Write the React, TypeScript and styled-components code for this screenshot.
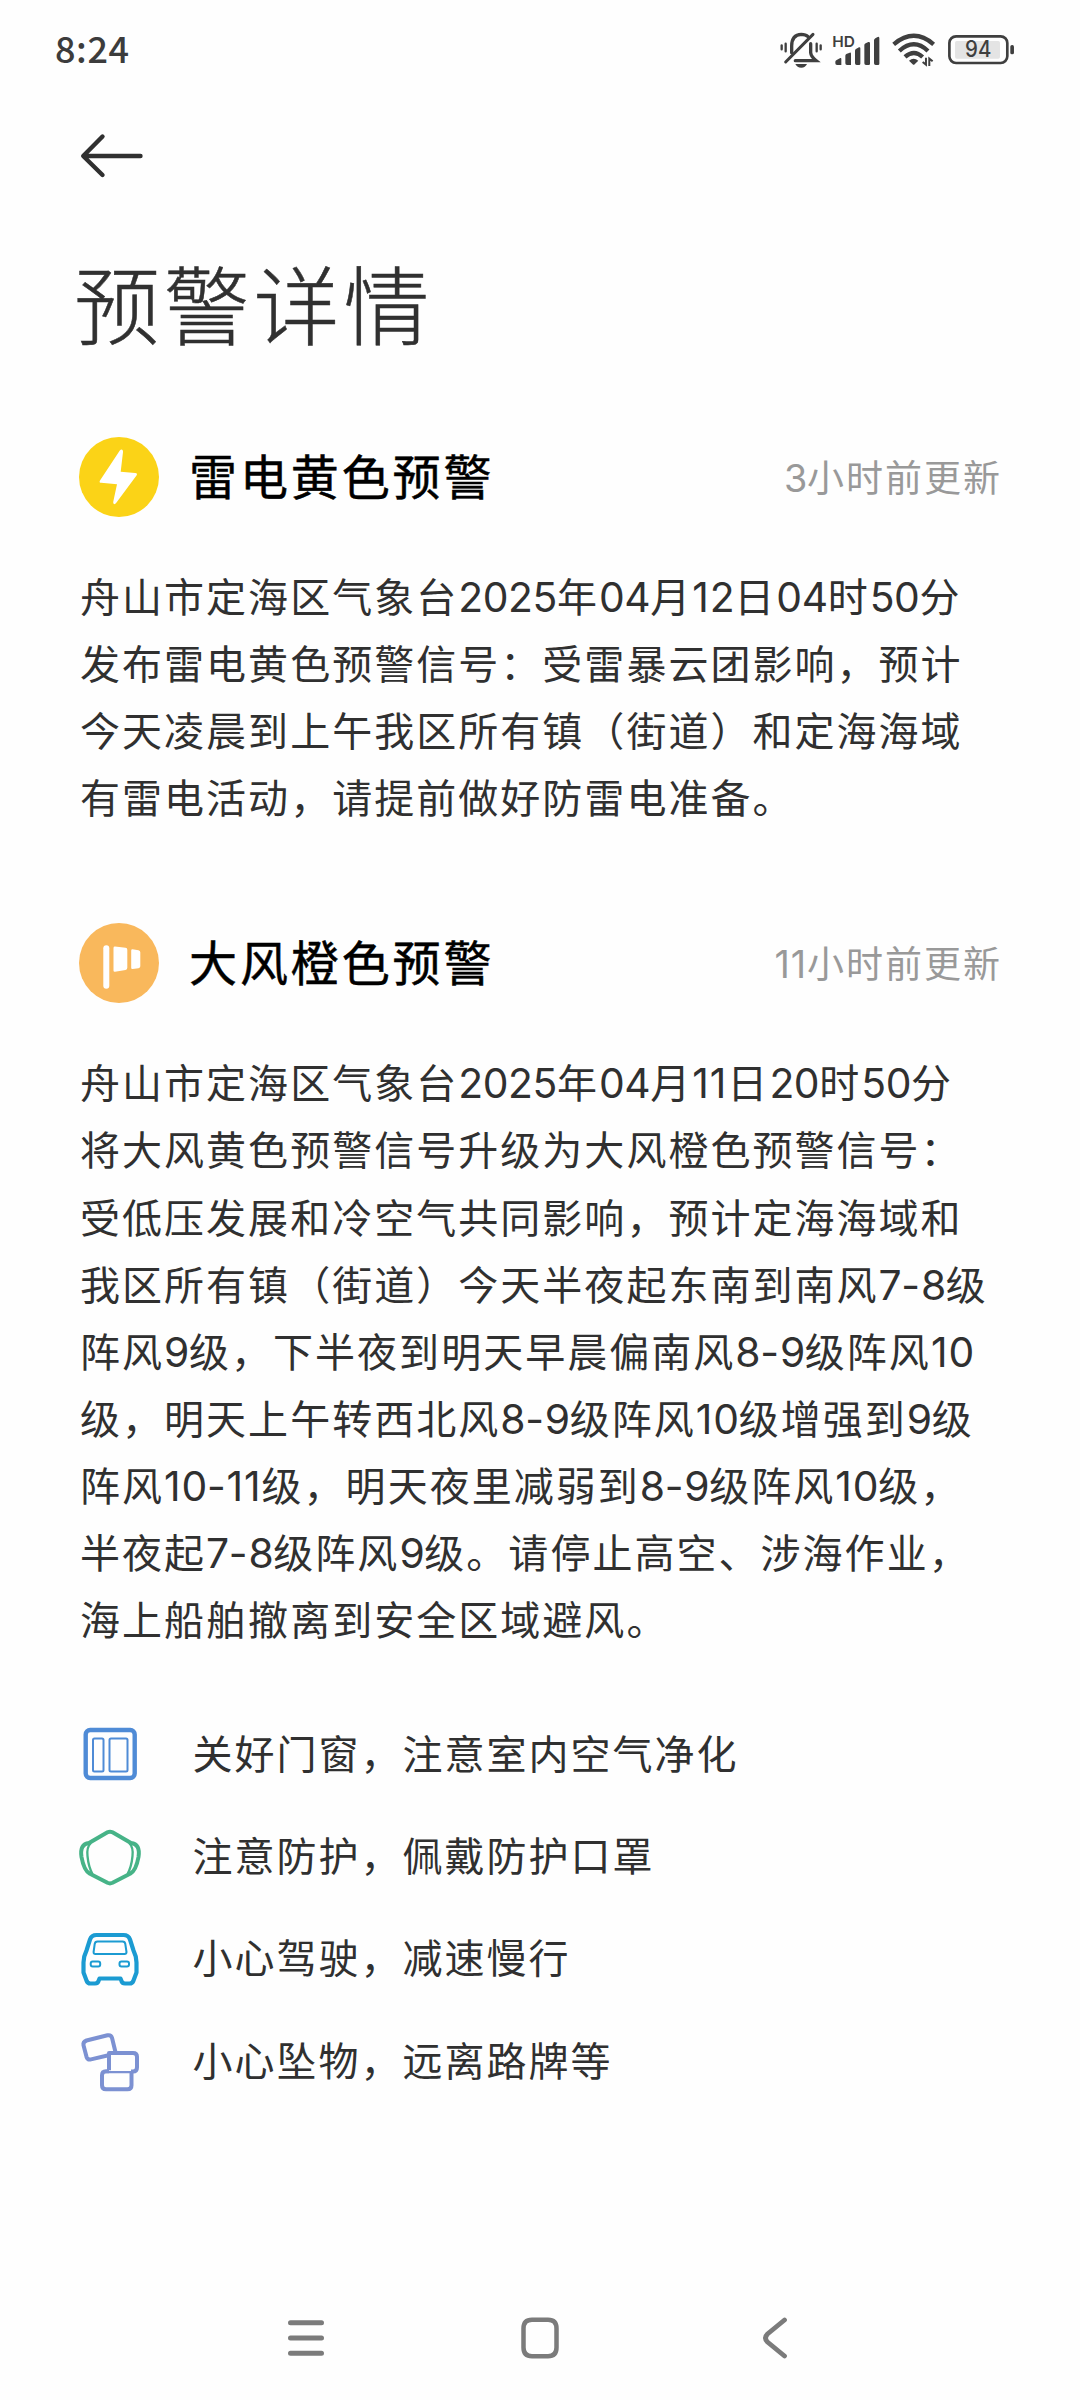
import React from "react";
import styled, { createGlobalStyle } from "styled-components";

const cjk = `"Noto Sans CJK SC", "Noto Sans", sans-serif`;

const GlobalStyle = createGlobalStyle`
  * { box-sizing: border-box; }
  body { margin: 0; background: #fefefe; }
  svg { display: block; flex: none; overflow: visible; }
`;

const Screen = styled.div`
  display: flex;
  flex-direction: column;
  width: 1080px;
  height: 2400px;
  background: #fefefe;
  color: #303030;
  font-family: ${cjk};
  overflow: hidden;
`;

const StatusBar = styled.header`
  display: flex;
  align-items: center;
  justify-content: space-between;
  height: 100px;
  padding: 0 65px 0 55px;
`;

const Clock = styled.span`
  font-size: 36px;
  font-weight: 500;
  line-height: 50px;
  padding-bottom: 6px;
  letter-spacing: 0.6px;
  color: #3c3c3c;
`;

const StatusIcons = styled.div`
  display: flex;
  align-items: center;
  color: #3f3f3f;
`;

const StatusIcon = styled.svg<{ $gap?: number }>`
  margin-left: ${(p) => p.$gap ?? 0}px;
`;

const AppBar = styled.nav`
  display: flex;
  align-items: center;
  height: 112px;
  padding-left: 81px;
`;

const BackButton = styled.button`
  border: 0;
  padding: 0;
  background: none;
  color: #303030;
`;

const Title = styled.h1`
  margin: 30px 0 0 74px;
  font-size: 86px;
  font-weight: 300;
  line-height: 120px;
  letter-spacing: 3.8px;
  -webkit-text-stroke: 0.5px currentColor;
`;

const Alert = styled.section<{ $top: number }>`
  display: flex;
  flex-direction: column;
  margin-top: ${(p) => p.$top}px;
  padding: 0 80px 0 79px;
`;

const AlertHeader = styled.div`
  display: flex;
  align-items: center;
  height: 80px;
`;

const AlertName = styled.h2`
  margin: 0 0 0 30px;
  padding-bottom: 5px;
  font-size: 48px;
  font-weight: 400;
  line-height: 75px;
  letter-spacing: 2.9px;
  color: #000;
  -webkit-text-stroke: 0.5px currentColor;
`;

const Updated = styled.span`
  margin-left: auto;
  font-size: 37px;
  line-height: 80px;
  letter-spacing: 2px;
  margin-right: -2px;
  color: #999;
  white-space: nowrap;
`;

const Body = styled.div`
  margin-top: 45px;
  padding-left: 1px;
`;

const Line = styled.p`
  margin: 0;
  height: 67.1px;
  font-size: 40px;
  line-height: 67.1px;
  letter-spacing: 2.03px;
  white-space: nowrap;
`;

const Num = styled.span<{ $narrow: boolean }>`
  font-family: Inter, ${cjk};
  font-size: 1.02em;
  font-kerning: none;
  letter-spacing: ${(p) => (p.$narrow ? 0.9 : -0.4)}px;
`;

const Tips = styled.ul`
  display: flex;
  flex-direction: column;
  margin: 51px 0 0;
  padding: 0 78px;
  list-style: none;
`;

const Tip = styled.li`
  display: flex;
  align-items: center;
  gap: 50.5px;
  height: 102.1px;
`;

const TipText = styled.span`
  padding-bottom: 4px;
  font-size: 40px;
  line-height: 60px;
  letter-spacing: 2px;
`;

const NavBar = styled.footer`
  display: flex;
  align-items: center;
  justify-content: space-between;
  height: 124px;
  margin-top: auto;
  padding: 0 293px 0 287px;
  color: #7b7b7b;
`;

const HomeIcon = styled.svg`
  margin: 0 9px 0 0;
`;

const Text = ({ value }: { value: string }) => (
  <>
    {value.split(/([023456789]+|[1-]+)/).map((part, i) =>
      i % 2 ? (
        <Num key={i} $narrow={/[1-]/.test(part)}>
          {part}
        </Num>
      ) : (
        part
      ),
    )}
  </>
);

const Thunder = () => (
  <svg width="80" height="80" viewBox="0 0 80 80">
    <circle cx="40" cy="40" r="40" fill="#fbd317" />
    <path
      d="M40.8 13.5 21 43.4c-.9 1.4-.4 2.3 1.200 2.400L38 47.200 34.300 64.600c-.5 2.800 1.500 3.400 3 1.200L57.500 38.500c1-1.500.5-2.400-1.300-2.500l-14.500-1.300 2.300-19.700c.2-2.700-1.700-3.500-3.200-1.500z"
      fill="#fff"
    />
  </svg>
);

const Wind = () => (
  <svg width="80" height="80" viewBox="0 0 80 80" fill="#fff">
    <circle cx="40" cy="40" r="40" fill="#f9b85c" />
    <rect x="24.300" y="22.300" width="6" height="43.500" rx="3" />
    <path d="M36 23.600 46.500 24.800q1.800.2 1.800 2v18q0 1.800-1.800 2.100L36 48.800q-1.500.2-1.500-1.300V25q0-1.500 1.500-1.400zM53.500 26.300l6 .9q1.800.3 1.800 2v14q0 1.700-1.800 2l-6 .8q-1.300.2-1.300-1.200V27.500q0-1.300 1.300-1.200z" />
  </svg>
);

const WindowIcon = () => (
  <svg width="64" height="64" viewBox="0 -1 64 64" fill="none" stroke="#4f8bd6">
    <rect x="7.700" y="7" width="49" height="48" rx="4.500" strokeWidth="4.400" />
    <rect x="15" y="15.500" width="10.500" height="33" rx="1.500" strokeWidth="2" />
    <rect x="31.500" y="15.500" width="18" height="33" rx="1.500" strokeWidth="2" />
  </svg>
);

const MaskIcon = () => (
  <svg width="64" height="64" viewBox="0 -1 64 64" fill="none" stroke="#46b387" strokeLinejoin="round">
    <path
      d="M29.500 7.300Q32 6 34.500 7.300L53 18Q62.500 19 60.500 32 58 45.500 52.500 48.500L34.500 57.800Q32 59 29.500 57.800L11.500 48.500Q6 45.500 3.500 32 1.500 19 11 18Z"
      strokeWidth="4"
    />
    <path d="M13 18Q8.500 22 9.500 31 10.500 42 14.500 49M51 18Q55.500 22 54.500 31 53.500 42 49.500 49" strokeWidth="2.300" />
  </svg>
);

const CarIcon = () => (
  <svg width="64" height="64" viewBox="0 -.5 64 64" fill="none" stroke="#1b9bd2" strokeLinejoin="round">
    <path
      d="M18.500 8.500Q13.500 8.500 12 13L8.500 24Q5.500 30 5.500 36V46L8.500 54Q9.500 57 12.500 57H17Q20 57 20.700 54L21.500 52H42.500L43.300 54Q44 57 47 57H51.500Q54.500 57 55.500 54L58.500 46V36Q58.500 30 55.500 24L52 13Q50.500 8.500 45.500 8.500Z"
      strokeWidth="4.200"
    />
    <path d="M19.500 15H44.500Q47 15 47.300 17.500L48.500 25.500Q48.500 27.500 46.500 27.500H17.500Q15.500 27.500 15.600 25.500L16.700 17.500Q17 15 19.500 15Z" strokeWidth="2" />
    <rect x="12.700" y="35" width="9.500" height="5" rx="2" strokeWidth="2" />
    <rect x="41.500" y="35" width="9.500" height="5" rx="2" strokeWidth="2" />
  </svg>
);

const BlocksIcon = () => (
  <svg width="64" height="64" viewBox="0 2.200 64 64" fill="none" stroke="#7c91d2" strokeWidth="4" strokeLinejoin="round">
    <path d="M30.500 28.500 13 32.600Q9.500 33.300 8.500 30L5.500 18.500Q4.800 15 8.500 13.700L29.500 8.500Q33 7.800 34 11L37.500 25.500" />
    <path d="M31 43.500V26.300H55Q59 26.300 59 30V40.500Q59 44.800 55 44.800H53" />
    <path d="M30 26.300H55M24.500 45.300H53.500" strokeWidth="2.400" />
    <path d="M31 44.500H28Q24 44.500 24 48.500V58.500Q24 62.500 28 62.500H49.500Q53.500 62.500 53.500 58.500V45.500" />
  </svg>
);

const alerts = [
  {
    icon: <Thunder />,
    name: "雷电黄色预警",
    updated: "3小时前更新",
    top: 74.500,
    lines: [
      "舟山市定海区气象台2025年04月12日04时50分",
      "发布雷电黄色预警信号：受雷暴云团影响，预计",
      "今天凌晨到上午我区所有镇（街道）和定海海域",
      "有雷电活动，请提前做好防雷电准备。",
    ],
  },
  {
    icon: <Wind />,
    name: "大风橙色预警",
    updated: "11小时前更新",
    top: 93.500,
    lines: [
      "舟山市定海区气象台2025年04月11日20时50分",
      "将大风黄色预警信号升级为大风橙色预警信号：",
      "受低压发展和冷空气共同影响，预计定海海域和",
      "我区所有镇（街道）今天半夜起东南到南风7-8级",
      "阵风9级，下半夜到明天早晨偏南风8-9级阵风10",
      "级，明天上午转西北风8-9级阵风10级增强到9级",
      "阵风10-11级，明天夜里减弱到8-9级阵风10级，",
      "半夜起7-8级阵风9级。请停止高空、涉海作业，",
      "海上船舶撤离到安全区域避风。",
    ],
  },
];

const tips = [
  { icon: <WindowIcon />, text: "关好门窗，注意室内空气净化" },
  { icon: <MaskIcon />, text: "注意防护，佩戴防护口罩" },
  { icon: <CarIcon />, text: "小心驾驶，减速慢行" },
  { icon: <BlocksIcon />, text: "小心坠物，远离路牌等" },
];

export default function App() {
  return (
    <Screen>
      <GlobalStyle />
      <StatusBar>
        <Clock>8:24</Clock>
        <StatusIcons>
          <StatusIcon width="42" height="36" viewBox="60 66 126 108" fill="none" stroke="currentColor" strokeWidth="10" strokeLinecap="round">
            <path d="M95 128V108Q95 74 124 73Q137 73 144 80M152 101V128Q153 140 168 152H106" />
            <path d="M77 156 159 73" strokeWidth="9" />
            <path d="M65 106V118M77 101V124M170 101V124M182 106V118" strokeWidth="7" />
            <path d="M106 162H141Q136 173 124 173Q111 173 106 162Z" fill="currentColor" stroke="none" />
          </StatusIcon>
          <StatusIcon $gap={10.7} width="46.7" height="30.700" viewBox="218 72 140 92" fill="currentColor">
            <text x="216" y="107" fontFamily="Inter, sans-serif" fontSize="44" fontWeight="600" textLength="68" lengthAdjust="spacingAndGlyphs">HD</text>
            <path d="M225 152Q225 149 229 147L240 141Q243 140 243 144V162H230Q225 162 225 157ZM255 134Q255 131 258 129L268 125Q272 124 272 128V162H260Q255 162 255 157ZM284 119Q284 115 288 113L296 109Q300 108 300 112V158Q300 162 296 162H289Q284 162 284 157ZM312 102Q312 99 316 97L324 93Q329 92 329 97V158Q329 162 325 162H317Q312 162 312 157ZM341 88Q341 85 345 82L352 78Q357 76 357 82V158Q357 162 353 162H346Q341 162 341 157Z" />
          </StatusIcon>
          <StatusIcon $gap={12} width="43.300" height="33.300" viewBox="394 70 130 100" fill="none" stroke="currentColor" strokeWidth="13" strokeLinecap="butt">
            <path d="M399 104Q460 53 519 104M416 124Q460 84 502 124M433 142Q460 118 486 142" />
            <path d="M445 153Q459 141 473 153L462 164Q459 167 456 164Z" fill="currentColor" stroke="none" />
            <path d="M496 144V165L486 157M506 169V147L516 155" strokeWidth="6" />
          </StatusIcon>
          <StatusIcon $gap={13.3} width="66.700" height="29.300" viewBox="564 74 200 88" fill="none" stroke="currentColor">
            <rect x="585" y="92" width="135" height="53" rx="5" fill="#e4e4e4" stroke="none" />
            <rect x="568" y="78" width="174" height="80" rx="20" strokeWidth="8" />
            <rect x="751" y="104" width="11" height="28" rx="5" fill="currentColor" stroke="none" />
            <text x="615" y="141" fontFamily="Inter, sans-serif" fontSize="67" fontWeight="500" fill="currentColor" stroke="none" textLength="79" lengthAdjust="spacingAndGlyphs">94</text>
          </StatusIcon>
        </StatusIcons>
      </StatusBar>

      <AppBar>
        <BackButton aria-label="返回">
          <svg width="62" height="44" viewBox="0 0 62 44" fill="none" stroke="currentColor" strokeWidth="4.400" strokeLinecap="round" strokeLinejoin="round">
            <path d="M59.500 22H3M21.500 2.500 2.200 22 21.500 41" />
          </svg>
        </BackButton>
      </AppBar>

      <Title>预警详情</Title>

      {alerts.map((a) => (
        <Alert key={a.name} $top={a.top}>
          <AlertHeader>
            {a.icon}
            <AlertName>{a.name}</AlertName>
            <Updated>
              <Text value={a.updated} />
            </Updated>
          </AlertHeader>
          <Body>
            {a.lines.map((line) => (
              <Line key={line}>
                <Text value={line} />
              </Line>
            ))}
          </Body>
        </Alert>
      ))}

      <Tips>
        {tips.map((t) => (
          <Tip key={t.text}>
            {t.icon}
            <TipText>{t.text}</TipText>
          </Tip>
        ))}
      </Tips>

      <NavBar>
        <svg width="38" height="38" viewBox="0 0 38 38" fill="none" stroke="currentColor" strokeWidth="5" strokeLinecap="round">
          <path d="M3.500 3.700H34.500M3.500 19H34.500M3.500 34.300H34.500" />
        </svg>
        <HomeIcon width="38" height="42" viewBox="0 0 38 42" fill="none" stroke="currentColor" strokeWidth="4.500">
          <path d="M11 2.800H27Q35.500 2.800 35.500 11.500V30.500Q35.500 39.200 27 39.200H11Q2.500 39.200 2.500 30.500V11.500Q2.500 2.800 11 2.800Z" />
        </HomeIcon>
        <svg width="24" height="42" viewBox="0 0 24 42" fill="none" stroke="currentColor" strokeWidth="4.800" strokeLinecap="round">
          <path d="M21.500 3 4.500 17Q.5 21 4.500 25L21.500 39" />
        </svg>
      </NavBar>
    </Screen>
  );
}
